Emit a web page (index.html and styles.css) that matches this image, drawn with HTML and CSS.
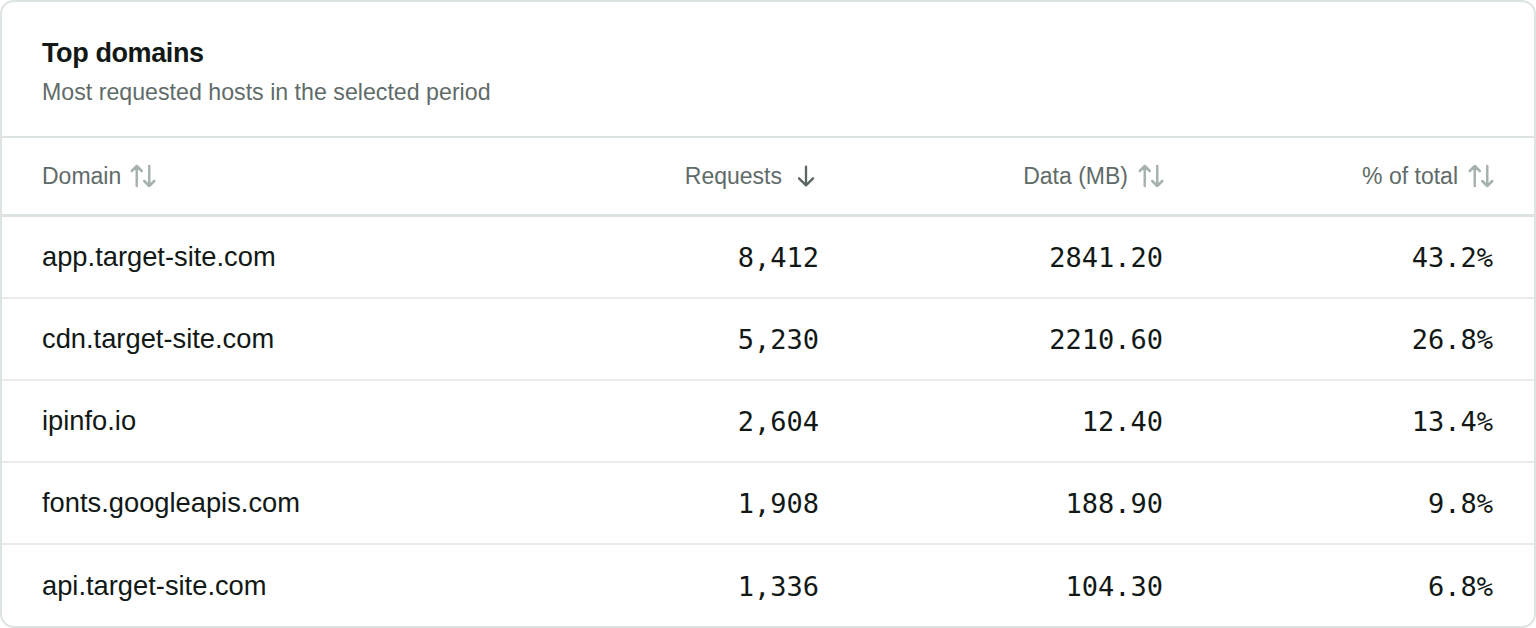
FILE: index.html
```html
<!DOCTYPE html>
<html lang="en">
<head>
<meta charset="utf-8">
<title>Top domains</title>
<link rel="stylesheet" href="styles.css">
</head>
<body>
<section class="card">
  <header class="card-head">
    <h2 class="title">Top domains</h2>
    <p class="subtitle">Most requested hosts in the selected period</p>
  </header>
  <div class="table">
    <div class="row head">
      <div class="cell left">Domain <svg class="sort" viewBox="0 0 24 24"><path d="M7 20V4M3 8l4-4 4 4M17 4v16M13 16l4 4 4-4"/></svg></div>
      <div class="cell right">Requests <svg class="sort active" viewBox="0 0 24 24"><path d="M12 4v16M6 14l6 6 6-6"/></svg></div>
      <div class="cell right">Data (MB) <svg class="sort" viewBox="0 0 24 24"><path d="M7 20V4M3 8l4-4 4 4M17 4v16M13 16l4 4 4-4"/></svg></div>
      <div class="cell right">% of total <svg class="sort" viewBox="0 0 24 24"><path d="M7 20V4M3 8l4-4 4 4M17 4v16M13 16l4 4 4-4"/></svg></div>
    </div>
    <div class="row"><div class="cell left name">app.target-site.com</div><div class="cell right num">8,412</div><div class="cell right num">2841.20</div><div class="cell right num">43.2%</div></div>
    <div class="row"><div class="cell left name">cdn.target-site.com</div><div class="cell right num">5,230</div><div class="cell right num">2210.60</div><div class="cell right num">26.8%</div></div>
    <div class="row"><div class="cell left name">ipinfo.io</div><div class="cell right num">2,604</div><div class="cell right num">12.40</div><div class="cell right num">13.4%</div></div>
    <div class="row"><div class="cell left name">fonts.googleapis.com</div><div class="cell right num">1,908</div><div class="cell right num">188.90</div><div class="cell right num">9.8%</div></div>
    <div class="row last"><div class="cell left name">api.target-site.com</div><div class="cell right num">1,336</div><div class="cell right num">104.30</div><div class="cell right num">6.8%</div></div>
  </div>
</section>
</body>
</html>
```
FILE: styles.css
```css
* { box-sizing: border-box; }
html, body { margin: 0; padding: 0; background: #ffffff; }
body { font-family: "Liberation Sans", Arial, sans-serif; color: #111816; }
.card {
  width: 1536px;
  height: 628px;
  border: 2px solid #dde3e1;
  border-radius: 14px;
  background: #fff;
  overflow: hidden;
}
.card-head {
  padding: 35px 40px 0 40px;
  height: 136px;
  border-bottom: 2px solid #dde3e1;
}
.title {
  margin: 0;
  font-size: 27px;
  font-weight: 700;
  line-height: 32px;
  color: #111816;
  letter-spacing: -0.4px;
}
.subtitle {
  margin: 9px 0 0 0;
  font-size: 23.2px;
  line-height: 28px;
  color: #5f6b69;
}
.row {
  display: grid;
  grid-template-columns: 477px 300px 344px 330px;
  padding: 0 41px 0 40px;
  height: 82px;
  align-items: center;
  border-bottom: 2px solid #e8eceb;
}
.row.head {
  height: 79px;
  border-bottom: 3px solid #dde3e1;
  font-size: 23px;
  color: #5f6b69;
}
.row.last { border-bottom: none; }
.cell { display: flex; align-items: center; }
.cell.right { justify-content: flex-end; }
.name { font-size: 27.3px; color: #111816; }
.num {
  font-family: "DejaVu Sans Mono", "Liberation Mono", monospace;
  font-size: 27px;
  color: #111816;
}
.sort {
  width: 30px;
  height: 30px;
  margin-left: 7px;
  fill: none;
  stroke: #a7b1af;
  stroke-width: 2;
  stroke-linecap: round;
  stroke-linejoin: round;
}
.cell.right .sort { margin-left: 8px; margin-right: -3px; }
.cell.right .sort.active { stroke: #5a6663; width: 28px; height: 28px; margin-left: 10px; margin-right: -1px; }
```
